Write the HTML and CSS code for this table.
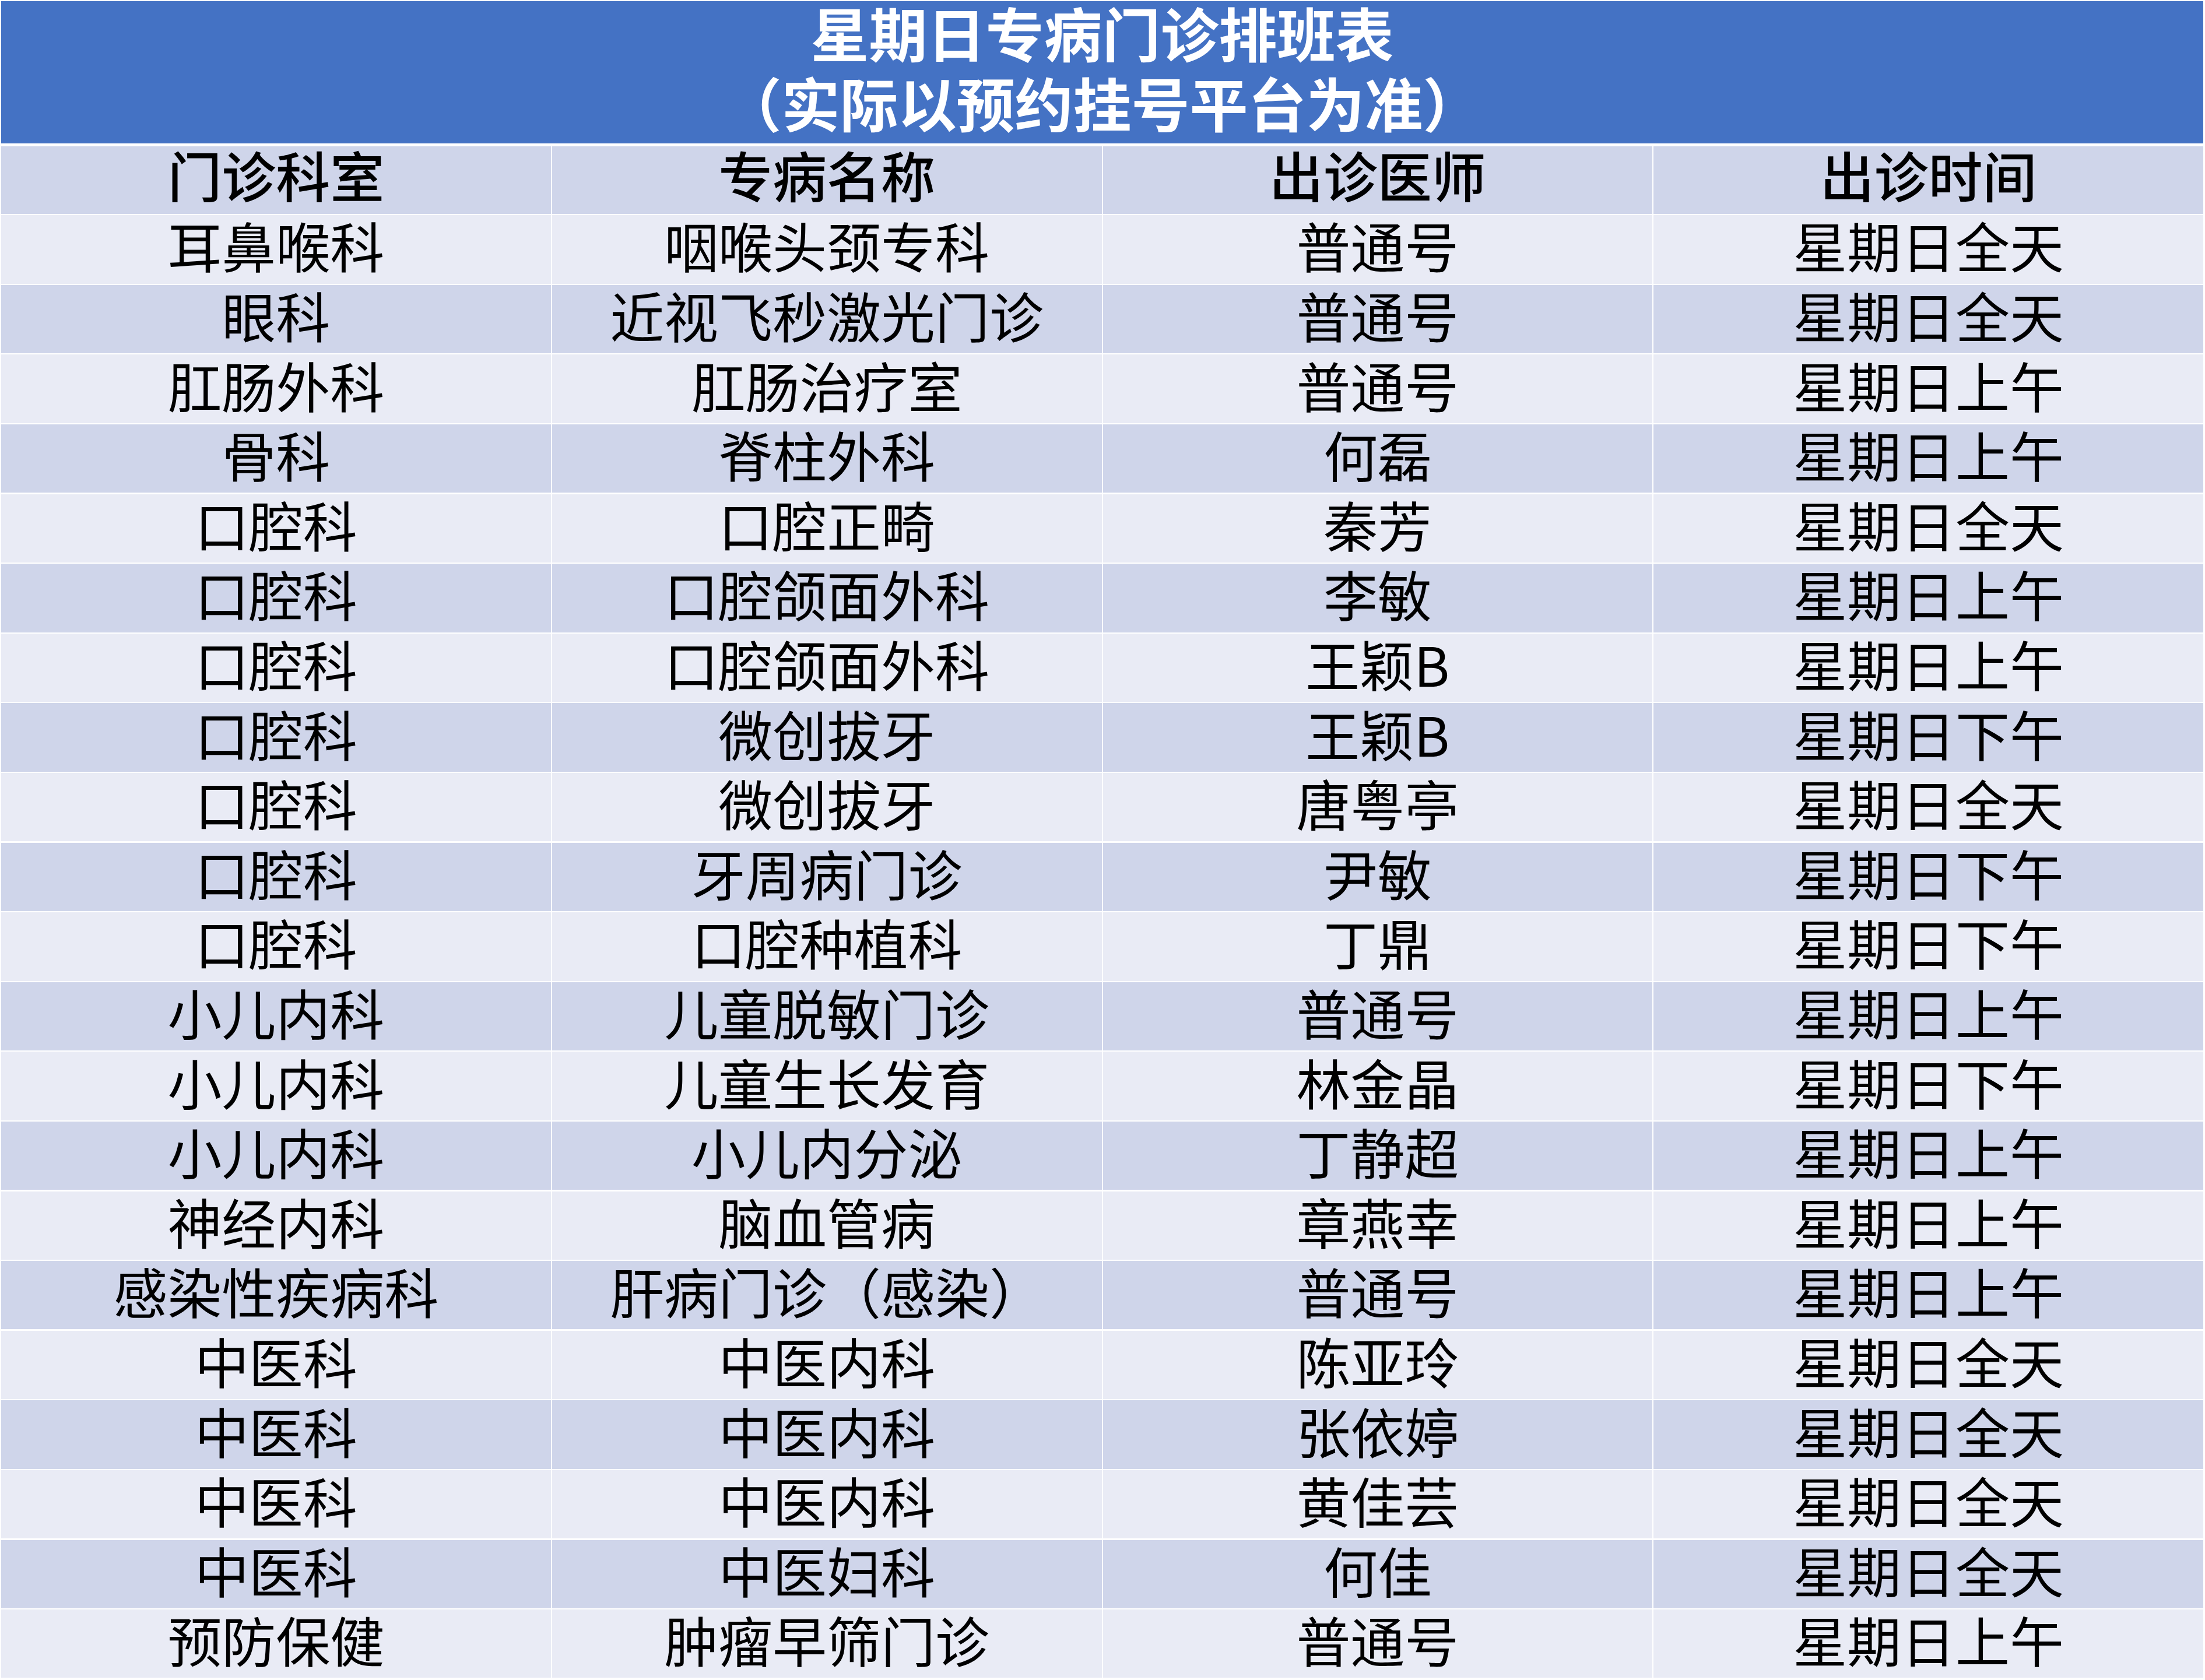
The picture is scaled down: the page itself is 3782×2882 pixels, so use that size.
FILE: index.html
```html
<!DOCTYPE html>
<html lang="zh-CN">
<head>
<meta charset="utf-8">
<title>星期日专病门诊排班表</title>
<link rel="stylesheet" href="styles.css">
</head>
<body>
<div class="sheet">
  <div class="title">
    <div class="title-line">星期日专病门诊排班表</div>
    <div class="title-line">（实际以预约挂号平台为准）</div>
  </div>
  <div class="row head">
    <div class="cell">门诊科室</div><div class="cell">专病名称</div><div class="cell">出诊医师</div><div class="cell">出诊时间</div>
  </div>
  <div class="row odd"><div class="cell">耳鼻喉科</div><div class="cell">咽喉头颈专科</div><div class="cell">普通号</div><div class="cell">星期日全天</div></div>
  <div class="row even"><div class="cell">眼科</div><div class="cell">近视飞秒激光门诊</div><div class="cell">普通号</div><div class="cell">星期日全天</div></div>
  <div class="row odd"><div class="cell">肛肠外科</div><div class="cell">肛肠治疗室</div><div class="cell">普通号</div><div class="cell">星期日上午</div></div>
  <div class="row even"><div class="cell">骨科</div><div class="cell">脊柱外科</div><div class="cell">何磊</div><div class="cell">星期日上午</div></div>
  <div class="row odd"><div class="cell">口腔科</div><div class="cell">口腔正畸</div><div class="cell">秦芳</div><div class="cell">星期日全天</div></div>
  <div class="row even"><div class="cell">口腔科</div><div class="cell">口腔颌面外科</div><div class="cell">李敏</div><div class="cell">星期日上午</div></div>
  <div class="row odd"><div class="cell">口腔科</div><div class="cell">口腔颌面外科</div><div class="cell">王颖B</div><div class="cell">星期日上午</div></div>
  <div class="row even"><div class="cell">口腔科</div><div class="cell">微创拔牙</div><div class="cell">王颖B</div><div class="cell">星期日下午</div></div>
  <div class="row odd"><div class="cell">口腔科</div><div class="cell">微创拔牙</div><div class="cell">唐粤亭</div><div class="cell">星期日全天</div></div>
  <div class="row even"><div class="cell">口腔科</div><div class="cell">牙周病门诊</div><div class="cell">尹敏</div><div class="cell">星期日下午</div></div>
  <div class="row odd"><div class="cell">口腔科</div><div class="cell">口腔种植科</div><div class="cell">丁鼎</div><div class="cell">星期日下午</div></div>
  <div class="row even"><div class="cell">小儿内科</div><div class="cell">儿童脱敏门诊</div><div class="cell">普通号</div><div class="cell">星期日上午</div></div>
  <div class="row odd"><div class="cell">小儿内科</div><div class="cell">儿童生长发育</div><div class="cell">林金晶</div><div class="cell">星期日下午</div></div>
  <div class="row even"><div class="cell">小儿内科</div><div class="cell">小儿内分泌</div><div class="cell">丁静超</div><div class="cell">星期日上午</div></div>
  <div class="row odd"><div class="cell">神经内科</div><div class="cell">脑血管病</div><div class="cell">章燕幸</div><div class="cell">星期日上午</div></div>
  <div class="row even"><div class="cell">感染性疾病科</div><div class="cell">肝病门诊（感染）</div><div class="cell">普通号</div><div class="cell">星期日上午</div></div>
  <div class="row odd"><div class="cell">中医科</div><div class="cell">中医内科</div><div class="cell">陈亚玲</div><div class="cell">星期日全天</div></div>
  <div class="row even"><div class="cell">中医科</div><div class="cell">中医内科</div><div class="cell">张依婷</div><div class="cell">星期日全天</div></div>
  <div class="row odd"><div class="cell">中医科</div><div class="cell">中医内科</div><div class="cell">黄佳芸</div><div class="cell">星期日全天</div></div>
  <div class="row even"><div class="cell">中医科</div><div class="cell">中医妇科</div><div class="cell">何佳</div><div class="cell">星期日全天</div></div>
  <div class="row odd"><div class="cell">预防保健</div><div class="cell">肿瘤早筛门诊</div><div class="cell">普通号</div><div class="cell">星期日上午</div></div>
</div>
</body>
</html>
```

FILE: styles.css
```css
html, body {
  margin: 0;
  padding: 0;
  background: #ffffff;
}

body {
  font-family: "Noto Sans CJK SC", "Noto Sans", sans-serif;
  color: #000000;
}

.sheet {
  width: 3777px;
  margin: 2px 0 0 2px;
  display: flex;
  flex-direction: column;
  gap: 2.3px;
}

.title {
  height: 244px;
  margin-bottom: 2.7px;
  background: #4472c4;
  color: #ffffff;
  font-size: 100px;
  font-weight: 700;
  line-height: 100px;
  display: flex;
  flex-direction: column;
  justify-content: flex-start;
  align-items: center;
  gap: 20px;
  padding-top: 3px;
  box-sizing: border-box;
}

.title-line {
  white-space: nowrap;
}

.row {
  display: grid;
  grid-template-columns: repeat(4, 1fr);
  column-gap: 2px;
  height: 117.3px;
}

.row.head {
  height: 116px;
}

.cell {
  display: flex;
  align-items: center;
  justify-content: center;
  font-size: 93px;
  line-height: 93px;
  white-space: nowrap;
  padding-bottom: 16px;
  box-sizing: border-box;
}

.head .cell {
  background: #cfd5ea;
  font-weight: 500;
  padding-bottom: 21px;
}

.odd .cell {
  background: #e9ebf5;
}

.even .cell {
  background: #cfd5ea;
}
```
